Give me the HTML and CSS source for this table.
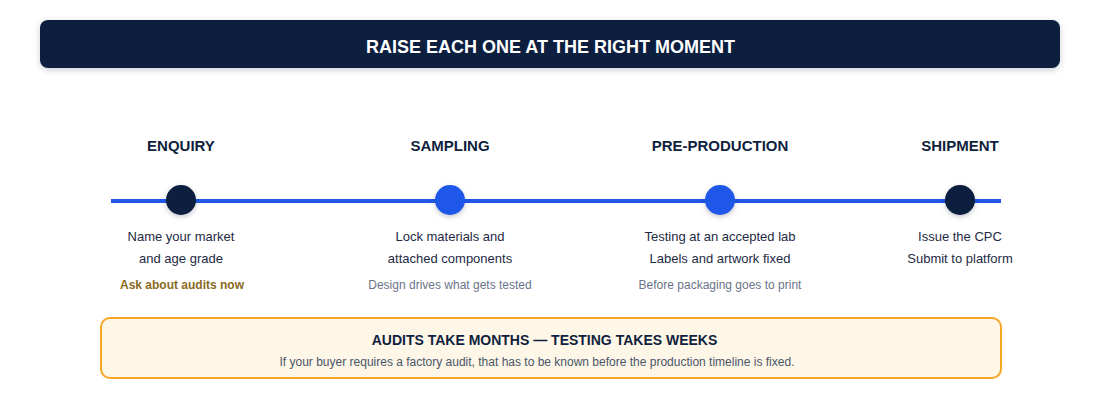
FILE: index.html
```html
<!DOCTYPE html>
<html lang="en">
<head>
<meta charset="utf-8">
<title>Raise each one at the right moment</title>
<link rel="stylesheet" href="styles.css">
</head>
<body>
<div class="page">
  <header class="banner">
    <h1 class="banner-title">RAISE EACH ONE AT THE RIGHT MOMENT</h1>
  </header>

  <section class="steps">
    <div class="step step--first">
      <h2 class="step-title">ENQUIRY</h2>
      <span class="dot dot--dark"></span>
      <p class="step-line">Name your market</p>
      <p class="step-line">and age grade</p>
      <p class="step-note step-note--gold">Ask about audits now</p>
    </div>
    <div class="step">
      <h2 class="step-title">SAMPLING</h2>
      <span class="dot dot--blue"></span>
      <p class="step-line">Lock materials and</p>
      <p class="step-line">attached components</p>
      <p class="step-note">Design drives what gets tested</p>
    </div>
    <div class="step">
      <h2 class="step-title">PRE-PRODUCTION</h2>
      <span class="dot dot--blue"></span>
      <p class="step-line">Testing at an accepted lab</p>
      <p class="step-line">Labels and artwork fixed</p>
      <p class="step-note">Before packaging goes to print</p>
    </div>
    <div class="step">
      <h2 class="step-title">SHIPMENT</h2>
      <span class="dot dot--dark"></span>
      <p class="step-line">Issue the CPC</p>
      <p class="step-line">Submit to platform</p>
    </div>
  </section>

  <aside class="callout">
    <h3 class="callout-title">AUDITS TAKE MONTHS — TESTING TAKES WEEKS</h3>
    <p class="callout-text">If your buyer requires a factory audit, that has to be known before the production timeline is fixed.</p>
  </aside>
</div>
</body>
</html>
```

FILE: styles.css
```css
* { box-sizing: border-box; }

html, body {
  margin: 0;
  padding: 0;
  background: #ffffff;
}

body {
  font-family: "Liberation Sans", Arial, sans-serif;
  color: #1e293b;
}

.page {
  width: 1101px;
  padding-top: 20px;
}

.banner {
  margin: 0 41px 0 40px;
  height: 48px;
  background: #0c1f3f;
  border-radius: 8px;
  box-shadow: 0 2px 6px rgba(12, 31, 63, 0.22);
  display: flex;
  align-items: center;
  justify-content: center;
}

.banner-title {
  margin: 0;
  padding-top: 5px;
  padding-left: 1px;
  color: #ffffff;
  font-size: 18px;
  font-weight: 700;
  line-height: 22px;
}

.steps {
  position: relative;
  margin: 69px 0 0 80px;
  display: grid;
  grid-template-columns: 200px 200px 200px 140px;
  column-gap: 70px;
  width: 950px;
}

.steps::before {
  content: "";
  position: absolute;
  left: 31px;
  right: 29px;
  top: 62px;
  height: 4px;
  background: #1f57e8;
}

.step {
  display: flex;
  flex-direction: column;
  align-items: center;
  text-align: center;
  white-space: nowrap;
}

.step--first { padding-left: 2px; }

.step-title {
  margin: 0;
  font-size: 15px;
  line-height: 18px;
  font-weight: 700;
  color: #0f1f3d;
}

.dot {
  position: relative;
  display: block;
  width: 30px;
  height: 30px;
  border-radius: 50%;
  margin-top: 30px;
  box-shadow: 0 2px 5px rgba(15, 31, 61, 0.25);
}

.dot--dark { background: #0c1f3f; }
.dot--blue { background: #1f57e8; }

.step-line {
  margin: 0;
  font-size: 13px;
  line-height: 22px;
  color: #1e2a44;
}

.dot + .step-line { margin-top: 11px; }

.step-note {
  margin: 6px 0 0;
  font-size: 12px;
  line-height: 18px;
  color: #6b7489;
}

.step-note--gold {
  color: #8a6a1e;
  font-weight: 700;
  padding-left: 2px;
}

.callout {
  margin: 23px 0 0 100px;
  width: 902px;
  height: 62px;
  border: 2px solid #f5a623;
  border-radius: 10px;
  background: #fef6e7;
  padding-top: 12px;
  text-align: center;
}

.callout-title {
  margin: 0;
  padding-right: 13px;
  font-size: 14px;
  line-height: 18px;
  font-weight: 700;
  color: #0f1f3d;
}

.callout-text {
  margin: 5px 0 0;
  padding-right: 28px;
  font-size: 12px;
  line-height: 16px;
  color: #4a5568;
}
```
